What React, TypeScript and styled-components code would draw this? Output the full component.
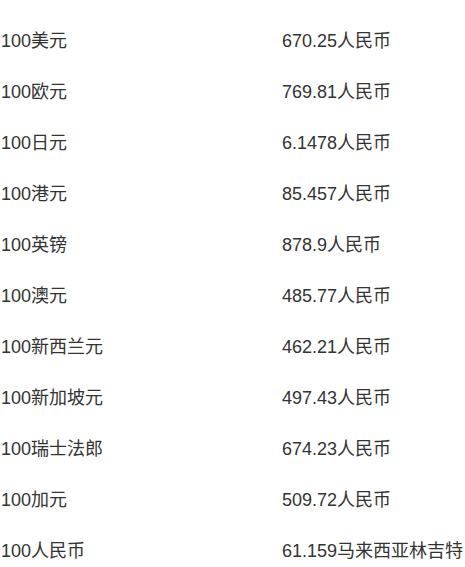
import { Fragment } from 'react'
import styled, { createGlobalStyle } from 'styled-components'

const GlobalStyle = createGlobalStyle`
  html, body {
    margin: 0;
    padding: 0;
    background: #fff;
  }
  body {
    font-family: "Liberation Sans", Arial, "Noto Sans CJK SC", sans-serif;
    color: #333;
  }
`

const Table = styled.div`
  padding-top: 16px;
  display: grid;
  grid-template-columns: 281px 1fr;
`

const Cell = styled.div`
  height: 51px;
  line-height: 51px;
  font-size: 18px;
  white-space: nowrap;
  padding-left: 1px;
`

const rates: [string, string][] = [
  ['100美元', '670.25人民币'],
  ['100欧元', '769.81人民币'],
  ['100日元', '6.1478人民币'],
  ['100港元', '85.457人民币'],
  ['100英镑', '878.9人民币'],
  ['100澳元', '485.77人民币'],
  ['100新西兰元', '462.21人民币'],
  ['100新加坡元', '497.43人民币'],
  ['100瑞士法郎', '674.23人民币'],
  ['100加元', '509.72人民币'],
  ['100人民币', '61.159马来西亚林吉特'],
]

export default function App() {
  return (
    <>
      <GlobalStyle />
      <Table>
        {rates.map(([from, to]) => (
          <Fragment key={from}>
            <Cell>{from}</Cell>
            <Cell>{to}</Cell>
          </Fragment>
        ))}
      </Table>
    </>
  )
}
